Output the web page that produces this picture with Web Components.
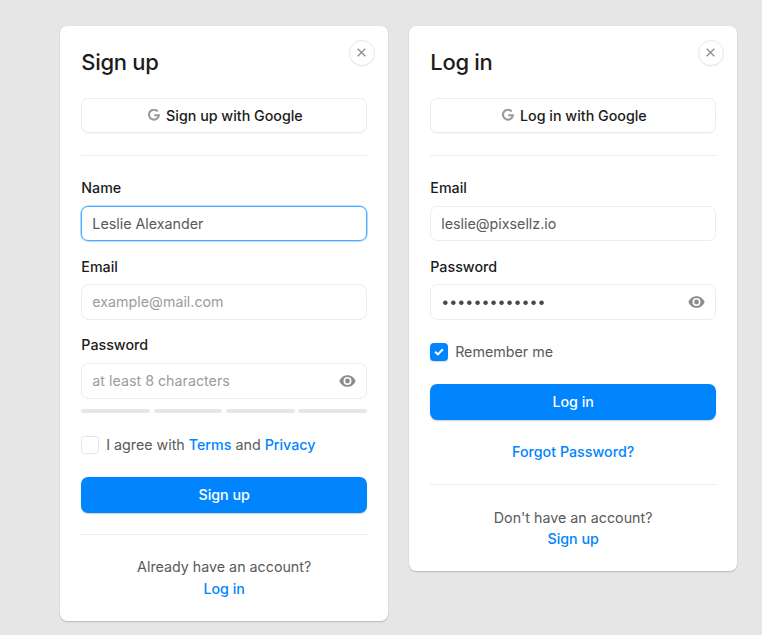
<!DOCTYPE html>
<html lang="en">
<head>
<meta charset="utf-8">
<title>Sign up / Log in</title>
<style>
  :root { --u: .8929px; --blue: #0085ff; --line: #ececec; --text: #5a5a5a; --ink: #1c1c1c; --muted: #9c9c9c; }
  body {
    margin: 0; height: 635px; box-sizing: border-box; padding: 26.3px 0 0 59.9px; background: #e6e6e6;
    font: 400 calc(16 * var(--u))/calc(24 * var(--u)) Inter, "Liberation Sans", sans-serif;
    color: var(--text); overflow: hidden;
  }
  main { display: flex; align-items: flex-start; gap: 20.4px; }
</style>
</head>
<body>
<main>
  <auth-card heading="Sign up">
    <google-button>Sign up with Google</google-button>
    <rule-line></rule-line>
    <form-fields>
      <text-field label="Name" focused>Leslie Alexander</text-field>
      <text-field label="Email" empty>example@mail.com</text-field>
      <text-field label="Password" empty eye meter>at least 8 characters</text-field>
    </form-fields>
    <check-row>I agree with <text-link>Terms</text-link> and <text-link>Privacy</text-link></check-row>
    <primary-button>Sign up</primary-button>
    <rule-line></rule-line>
    <card-foot>Already have an account?<text-link slot="action">Log in</text-link></card-foot>
  </auth-card>
  <auth-card heading="Log in">
    <google-button>Log in with Google</google-button>
    <rule-line></rule-line>
    <form-fields>
      <text-field label="Email">leslie@pixsellz.io</text-field>
      <text-field label="Password" eye secret>•••••••••••••</text-field>
    </form-fields>
    <check-row checked>Remember me</check-row>
    <primary-button>Log in</primary-button>
    <card-foot><text-link slot="action">Forgot Password?</text-link></card-foot>
    <rule-line></rule-line>
    <card-foot>Don't have an account?<text-link slot="action">Sign up</text-link></card-foot>
  </auth-card>
</main>
<script>
const define = (name, render) => customElements.define(name, class extends HTMLElement {
  constructor() {
    super();
    this.attachShadow({ mode: "open" }).innerHTML = render(this);
  }
});

define("auth-card", el => `
  <style>
    :host { display: flex; flex-direction: column; gap: calc(24 * var(--u)); box-sizing: border-box; position: relative;
      width: calc(368 * var(--u)); padding: calc(24 * var(--u)); background: #fff; border-radius: calc(8 * var(--u));
      box-shadow: 0 1px 1.5px rgba(0,0,0,.2), 0 0 1px rgba(0,0,0,.06); }
    h2 { margin: 0; height: calc(32 * var(--u)); font-size: calc(24.6 * var(--u)); line-height: calc(32.6 * var(--u)); font-weight: 450; color: var(--ink); letter-spacing: -.012em; }
    button { position: absolute; top: 13.6px; right: 13.4px; width: 26px; height: 26px; padding: 0; display: grid; place-items: center;
      border: 1px solid #e8e8e8; border-radius: 50%; background: #fff; box-shadow: 0 1px 1px rgba(0,0,0,.04); }
    svg { display: block; }
  </style>
  <h2>${el.getAttribute("heading")}</h2>
  <button aria-label="Close"><svg width="10" height="9" viewBox="0 0 10 9" fill="none" stroke="#8c8c8c" stroke-width="1.3"><path d="M.7.7l7.6 7.6M8.3.7L.7 8.3"/></svg></button>
  <slot></slot>`);

define("rule-line", () => `<style>:host { display: block; height: calc(1 * var(--u)); background: var(--line); }</style>`);

define("form-fields", () => `<style>:host { display: flex; flex-direction: column; gap: calc(16 * var(--u)); }</style><slot></slot>`);

define("google-button", () => `
  <style>
    :host { display: flex; align-items: center; justify-content: center; gap: 6.5px; box-sizing: border-box; height: calc(40 * var(--u));
      padding-left: 2px; border: 1px solid var(--line); border-radius: calc(8 * var(--u)); color: var(--ink); font-weight: 500;
      box-shadow: 0 .5px 1px rgba(0,0,0,.04); }
    svg { display: block; margin-top: -1px; }
  </style>
  <svg width="12" height="12" viewBox="0 0 12 12" fill="none" stroke="#999" stroke-width="2.1"><path d="M9.7 2.45A4.95 4.95 0 1 0 10.9 6.2H6.2"/></svg>
  <span><slot></slot></span>`);

define("text-field", el => `
  <style>
    :host { display: flex; flex-direction: column; }
    label { color: var(--ink); font-weight: 500; margin-bottom: calc(8 * var(--u)); }
    .box { display: flex; align-items: center; justify-content: space-between; box-sizing: border-box; height: calc(40 * var(--u));
      padding: 0 10.5px 0 10px; border: 1px solid var(--line); border-radius: calc(8 * var(--u)); }
    :host([focused]) .box { border-color: #4da9ff; box-shadow: 0 0 0 .6px #8dc8ff, 0 0 2px rgba(0,133,255,.25); }
    :host([empty]) .box { color: var(--muted); }
    :host([secret]) span { color: #484848; }
    .meter { display: grid; grid-template-columns: repeat(4, 1fr); gap: calc(4 * var(--u)); margin-top: calc(12 * var(--u)); }
    .meter i { height: calc(4 * var(--u)); border-radius: 2px; background: #e6e6e6; }
    svg { display: block; }
  </style>
  <label>${el.getAttribute("label")}</label>
  <div class="box"><span><slot></slot></span>${el.hasAttribute("eye") ? `
    <svg width="17" height="12" viewBox="0 0 17 12"><path fill="#8c8c8c" fill-rule="evenodd" d="M8.5.2C4.8.2 1.7 2.5.4 6c1.3 3.5 4.4 5.8 8.1 5.8S15.3 9.5 16.6 6C15.3 2.5 12.2.2 8.5.2zM8.5 10a4 4 0 1 1 0-8 4 4 0 0 1 0 8zM8.5 3.6a2.4 2.4 0 1 0 0 4.8 2.4 2.4 0 0 0 0-4.8z"/></svg>` : ""}</div>
  ${el.hasAttribute("meter") ? `<div class="meter"><i></i><i></i><i></i><i></i></div>` : ""}`);

define("check-row", el => `
  <style>
    :host { display: flex; align-items: center; gap: 7px; height: calc(24 * var(--u)); white-space: pre; }
    .tick { display: grid; place-items: center; box-sizing: border-box; width: calc(20 * var(--u)); height: calc(20 * var(--u));
      border: 1px solid #e6e6e6; border-radius: 3.5px; }
    :host([checked]) .tick { background: var(--blue); border-color: var(--blue); box-shadow: 0 1px 1px rgba(0,0,0,.15); }
    svg { display: block; }
  </style>
  <div class="tick">${el.hasAttribute("checked") ? `<svg width="10" height="8" viewBox="0 0 10 8" fill="none" stroke="#fff" stroke-width="2"><path d="M1.1 3.7L3.9 6.4 8.9 1.2"/></svg>` : ""}</div>
  <span><slot></slot></span>`);

define("text-link", () => `<style>:host { color: var(--blue); font-weight: 500; }</style><slot></slot>`);

define("primary-button", () => `
  <style>:host { display: flex; align-items: center; justify-content: center; height: calc(40 * var(--u)); border-radius: calc(8 * var(--u));
    background: var(--blue); color: #fff; font-weight: 500; box-shadow: 0 1px 1.5px rgba(0,0,0,.2); }</style>
  <slot></slot>`);

define("card-foot", () => `
  <style>:host { display: flex; flex-direction: column; align-items: center; }</style>
  <slot></slot><slot name="action"></slot>`);
</script>
</body>
</html>
